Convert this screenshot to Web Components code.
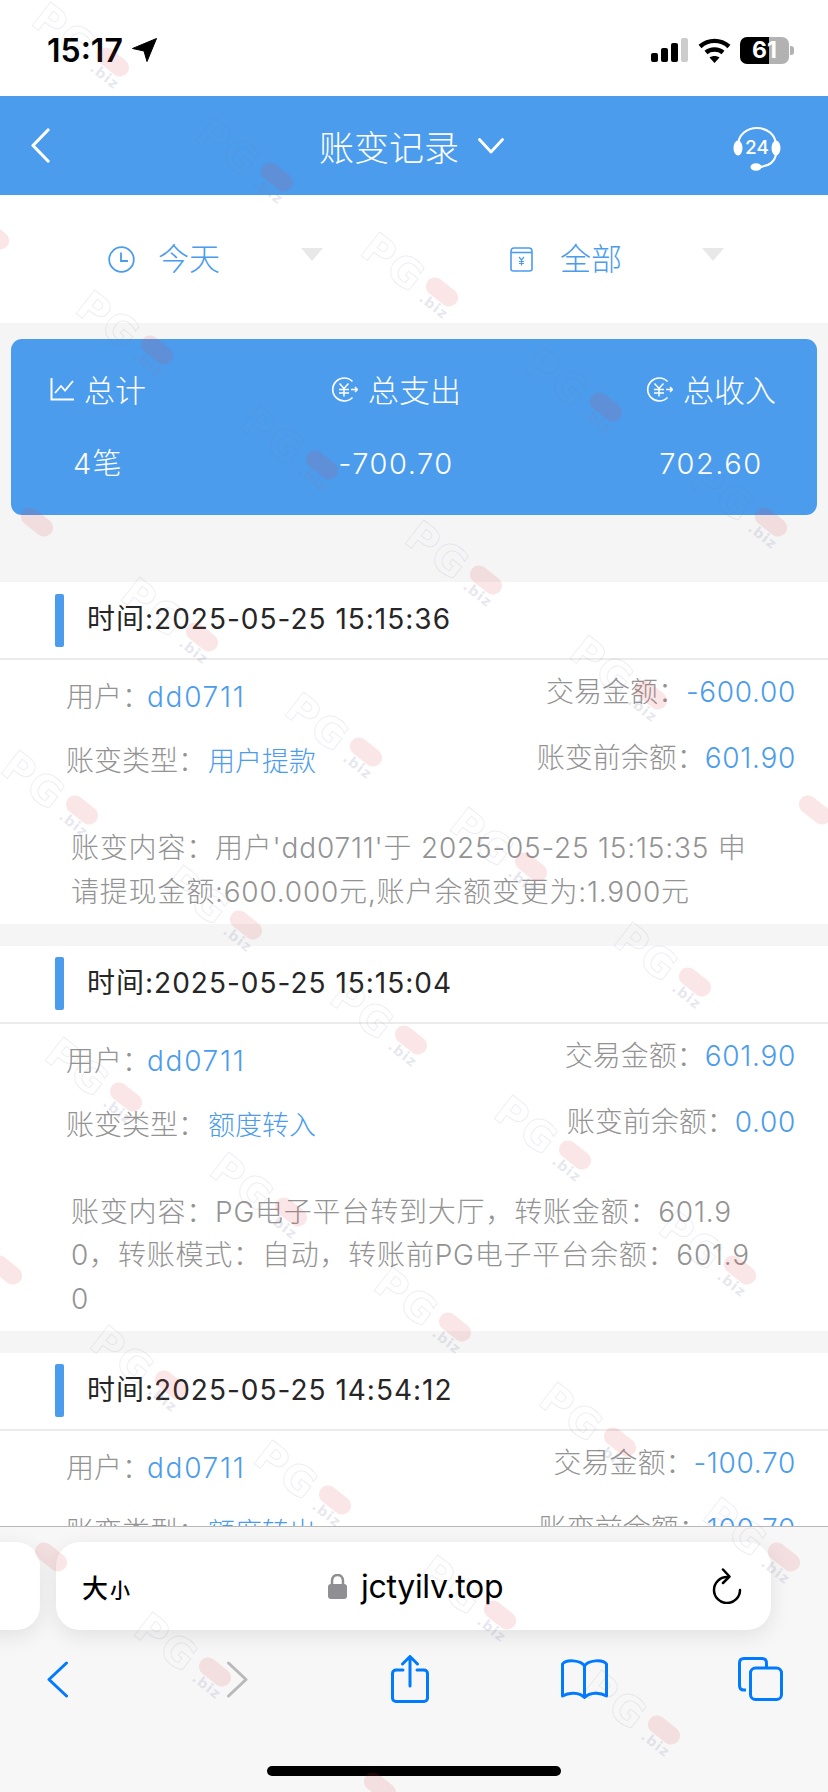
<!DOCTYPE html>
<html lang="zh-CN">
<head>
<meta charset="utf-8">
<title>账变记录</title>
<style>
  html, body { margin: 0; padding: 0; background: #f5f5f5; }
  body { width: 828px; height: 1792px; overflow: hidden; position: relative; display: flex; flex-direction: column; font-family: Inter, "Noto Sans CJK SC", sans-serif; }
  .scroll { flex: 1; min-height: 0; overflow: hidden; }
</style>
</head>
<body>
<status-bar></status-bar>
<div class="scroll">
  <app-header title="账变记录"></app-header>
  <filter-bar></filter-bar>
  <summary-card></summary-card>
  <ledger-item time="2025-05-25 15:15:36" user="dd0711" amount="-600.00" type="用户提款" balance="601.90">账变内容&#xFF1A;用户'dd0711'于 2025-05-25 15:15:35 申请提现金额:600.000元,账户余额变更为:1.900元</ledger-item>
  <ledger-item time="2025-05-25 15:15:04" user="dd0711" amount="601.90" type="额度转入" balance="0.00">账变内容&#xFF1A;PG电子平台转到大厅&#xFF0C;转账金额&#xFF1A;601.90&#xFF0C;转账模式&#xFF1A;自动&#xFF0C;转账前PG电子平台余额&#xFF1A;601.90</ledger-item>
  <ledger-item time="2025-05-25 14:54:12" user="dd0711" amount="-100.70" type="额度转出" balance="100.70"></ledger-item>
</div>
<browser-bar></browser-bar>
<pg-watermark></pg-watermark>

<script>
const COLON = '\uFF1A';
// ============================================================================
// Status bar
// ============================================================================
class StatusBar extends HTMLElement {
    connectedCallback() {
        this.attachShadow({ mode: 'open' }).innerHTML = `
      <style>
        :host { display: flex; align-items: center; height: 96px; box-sizing: border-box; padding: 4px 34px 0 47px; background: #fff; color: #000; font-family: Inter, Roboto, sans-serif; }
        .time { font-size: 32px; font-weight: 600; width: 85px; }
        .right { margin-left: auto; display: flex; align-items: center; }
        .batt { width: 49px; height: 27px; margin-left: 9px; border-radius: 7px; background: linear-gradient(90deg, #000 60%, #b2b2b2 60%); color: #fff; font-size: 23px; font-weight: 700; line-height: 27px; text-align: center; }
        .nub { width: 4px; height: 9px; background: #b2b2b2; border-radius: 0 3px 3px 0; margin-left: 1px; }
      </style>
      <span class="time">15:17</span>
      <svg width="25" height="24" viewBox="0 0 25 24"><path d="M24.5 0.5 15 23.5 12 13 0.5 10.5Z" fill="#000" stroke="#000" stroke-linejoin="round"/></svg>
      <div class="right">
        <svg width="37" height="24" viewBox="0 0 37 24"><rect x="0" y="15" width="7" height="9" rx="2" fill="#000"/><rect x="10" y="10" width="7" height="14" rx="2" fill="#000"/><rect x="20" y="5" width="7" height="19" rx="2" fill="#000"/><rect x="30" y="0" width="7" height="24" rx="2" fill="#ccc"/></svg>
        <svg width="33" height="25" viewBox="0 0 33 25" style="margin-left:10px" fill="none" stroke="#000" stroke-width="4.4"><path d="M2 8.5C10.500 1 22.500 1 31 8.500"/><path d="M8 14.500C12.500 10.500 20.500 10.500 25 14.500"/><path d="M16.500 25 11.500 19.500C14.500 17.500 18.500 17.500 21.500 19.500Z" fill="#000" stroke="none"/></svg>
        <span class="batt">61</span><span class="nub"></span>
      </div>`;
    }
}
customElements.define('status-bar', StatusBar);

// ============================================================================
// Blue title bar
// ============================================================================
class AppHeader extends HTMLElement {
    connectedCallback() {
        const title = this.getAttribute('title') || '';
        this.attachShadow({ mode: 'open' }).innerHTML = `
      <style>
        :host { display: flex; align-items: center; height: 99px; padding: 0 47px 0 30px; background: #4b9ced; color: #fff; }
        .title { flex: 1; display: flex; align-items: center; justify-content: center; gap: 19px; font: 300 35px "Noto Sans CJK SC", sans-serif; padding-left: 40px; }
        svg { display: block; }
      </style>
      <svg width="20" height="35" viewBox="0 0 20 35" fill="none" stroke="#fff" stroke-width="3.200" stroke-linecap="round" stroke-linejoin="round"><path d="M18 2 3 17.500 18 33"/></svg>
      <div class="title"><span>${title}</span>
        <svg width="26" height="16" viewBox="0 0 26 16" fill="none" stroke="#fff" stroke-width="2.800" stroke-linecap="round" stroke-linejoin="round"><path d="M1.500 1.500 13 14 24.500 1.500"/></svg>
      </div>
      <svg width="48" height="47" viewBox="0 0 48 47" style="margin-bottom:-5px">
        <path d="M5 21C5 -3 43 -3 43 21" fill="none" stroke="#fff" stroke-width="2.200"/>
        <ellipse cx="5" cy="23" rx="4.500" ry="7.500" fill="#fff"/><ellipse cx="43" cy="23" rx="4.500" ry="7.500" fill="#fff"/>
        <path d="M43 30C41 38 34 42 24 42" fill="none" stroke="#fff" stroke-width="2.200"/>
        <ellipse cx="23" cy="42" rx="5.500" ry="3.800" fill="#fff"/>
        <text x="24" y="28.500" text-anchor="middle" font-family="Inter, Roboto, sans-serif" font-size="19" font-weight="500" fill="#fff">24</text>
      </svg>`;
    }
}
customElements.define('app-header', AppHeader);

// ============================================================================
// Date + type filter row
// ============================================================================
const dropArrow = `<svg class="drop" width="22" height="13" viewBox="0 0 22 13"><path d="M0 0H22L11 13Z" fill="#e8e8e8"/></svg>`;

class FilterBar extends HTMLElement {
    connectedCallback() {
        const root = this.attachShadow({ mode: 'open' });
        root.innerHTML = `
      <style>
        :host { display: flex; height: 128px; padding-left: 108px; background: #fff; color: #4b9ced; font: 300 31px/40px "Noto Sans CJK SC", sans-serif; align-items: center; }
        .f { display: flex; align-items: center; flex: none; }
        .f.one { width: 402px; }
        svg { display: block; flex: none; }
        .drop { margin-top: -9px; }
        span { padding-bottom: 4px; }
      </style>
      <div class="f one">
        <svg width="27" height="27" viewBox="0 0 27 27" fill="none" stroke="#4b9ced" stroke-width="1.800"><circle cx="13.500" cy="13.500" r="12.300"/><path d="M13 6.500V15H20"/></svg>
        <span style="margin-left:23px;width:143px">今天</span>${dropArrow}
      </div>
      <div class="f">
        <svg width="23" height="25" viewBox="0 0 23 25" fill="none" stroke="#4b9ced" stroke-width="1.600"><path d="M1 4.500C1 2.500 2 1 4 1H19C21 1 22 2.500 22 4.500V22C22 23.500 21 24 19.500 24H3.500C2 24 1 23.500 1 22Z"/><path d="M1 5.500H22"/><path d="M9 10 11.500 13 14 10M11.500 13V18.500M9 14.500H14M9 16.500H14" stroke-width="1.200"/></svg>
        <span style="margin-left:27px;width:142px">全部</span>${dropArrow}
      </div>`;
    }
}
customElements.define('filter-bar', FilterBar);

// ============================================================================
// Totals card
// ============================================================================
const coinIcon = `<svg width="27" height="27" viewBox="0 0 27 27" fill="none" stroke="#fff" stroke-width="1.700"><path d="M21.500 5.500A11.500 11.500 0 1 0 21.500 21.500"/><path d="M8.500 7.500 13 12.500 17.500 7.500M13 12.500V20.500M8 13.500H18M8 17H18" stroke-width="1.500"/><path d="M20 13.500H26.500M24 11 26.500 13.500 24 16" stroke-width="1.400"/></svg>`;

class SummaryCard extends HTMLElement {
    connectedCallback() {
        this.attachShadow({ mode: 'open' }).innerHTML = `
      <style>
        :host { display: flex; justify-content: space-between; margin: 16px 11px 67px; height: 176px; box-sizing: border-box; padding: 28px 41px 0 39px; border-radius: 11px; background: #4b9ced; color: #fff; }
        .c { display: flex; flex-direction: column; align-items: center; }
        .h { display: flex; align-items: center; gap: 10px; font: 300 31px/44px "Noto Sans CJK SC", sans-serif; }
        .v { margin-top: 31px; font: 300 29px/44px Inter, "Noto Sans CJK SC", sans-serif; letter-spacing: 1.500px; }
        svg { display: block; }
      </style>
      <div class="c">
        <div class="h"><svg width="24" height="23" viewBox="0 0 24 23" fill="none" stroke="#fff" stroke-width="2"><path d="M1.500 0V21.500H24"/><path d="M5 15 11 8 15 12.500 23 3" stroke-width="1.800"/></svg><span>总计</span></div>
        <div class="v">4笔</div>
      </div>
      <div class="c"><div class="h">${coinIcon}<span>总支出</span></div><div class="v">-700.70</div></div>
      <div class="c"><div class="h">${coinIcon}<span>总收入</span></div><div class="v">702.60</div></div>`;
    }
}
customElements.define('summary-card', SummaryCard);

// ============================================================================
// One ledger record
// ============================================================================
class LedgerItem extends HTMLElement {
    connectedCallback() {
        const attr = (name) => this.getAttribute(name) ?? '';
        this.attachShadow({ mode: 'open' }).innerHTML = `
      <style>
        :host { display: block; margin-bottom: 22px; background: #fff; font: 300 28px Inter, "Noto Sans CJK SC", sans-serif; color: #939393; }
        .head { display: flex; align-items: center; height: 76px; border-bottom: 2px solid #ebebeb; color: #262626; font-weight: 400; padding-left: 55px; letter-spacing: 1px; }
        .head i { width: 9px; height: 53px; border-radius: 2px; background: #4b9ced; margin-right: 23px; }
        .head span { margin-bottom: 6px; }
        .row { display: flex; justify-content: space-between; padding: 0 32px 0 66px; line-height: 40px; }
        .row.a { margin-top: 17px; height: 64px; }
        .row.a .right { margin-top: -5px; }
        .row.b { height: 46px; }
        .row.b .right { margin-top: -3px; }
        b { font-weight: 300; color: #4b9ced; letter-spacing: .7px; }
        b.user { margin-left: -3px; letter-spacing: 1.700px; }
        b.type { margin-left: 2px; font-size: 27px; letter-spacing: 0; }
        .content { padding: 0 71px 9.500px; line-height: 43.500px; word-break: break-all; margin-top: 40px; letter-spacing: .8px; }
      </style>
      <div class="head"><i></i><span>时间:${attr('time')}</span></div>
      <div class="row a"><span>用户${COLON}<b class="user">${attr('user')}</b></span><span class="right">交易金额${COLON}<b>${attr('amount')}</b></span></div>
      <div class="row b"><span>账变类型${COLON}<b class="type">${attr('type')}</b></span><span class="right">账变前余额${COLON}<b>${attr('balance')}</b></span></div>
      <div class="content"><slot></slot></div>`;
    }
}
customElements.define('ledger-item', LedgerItem);

// ============================================================================
// Safari bottom chrome
// ============================================================================
class BrowserBar extends HTMLElement {
    connectedCallback() {
        this.attachShadow({ mode: 'open' }).innerHTML = `
      <style>
        :host { display: block; height: 266px; box-sizing: border-box; border-top: 1px solid #b8b8b8; background: #f7f7f7; color: #000; }
        .pills { display: flex; gap: 16px; margin: 15px 0 0 -60px; height: 88px; }
        .pill { border-radius: 24px; background: #fff; box-shadow: 0 6px 22px rgba(0,0,0,.09); height: 88px; flex: none; }
        .side { width: 100px; }
        .url { width: 715px; box-sizing: border-box; display: flex; align-items: center; padding: 0 29px 0 26px; }
        .aa { width: 246px; display: flex; align-items: baseline; font: 500 26px "Noto Sans CJK SC", sans-serif; }
        .aa small { font-size: 20px; margin-left: 2px; }
        .host { flex: 1; display: flex; align-items: center; gap: 14px; font: 400 32px Inter, Roboto, sans-serif; letter-spacing: -.3px; }
        .nav { display: grid; grid-template-columns: 180px 164px 170px 177px 1fr; padding-left: 47px; margin-top: 25px; align-items: center; height: 48px; }
        .home { width: 294px; height: 10px; border-radius: 5px; background: #000; margin: 63px 0 0 267px; }
        svg { display: block; }
      </style>
      <div class="pills">
        <div class="pill side"></div>
        <div class="pill url">
          <span class="aa">大<small>小</small></span>
          <span class="host">
            <svg width="19" height="25" viewBox="0 0 19 25"><path d="M4 11V7C4 -1 15 -1 15 7V11" fill="none" stroke="#8e8e93" stroke-width="2.500"/><rect y="10" width="19" height="15" rx="3" fill="#8e8e93"/></svg>
            jctyilv.top
          </span>
          <svg width="30" height="36" viewBox="0 0 30 36" fill="none" stroke="#000" stroke-width="2.500" stroke-linecap="round" stroke-linejoin="round"><path d="M15 9A13 13 0 1 0 28 22"/><path d="M11 1.500 17.500 8.500 11 15"/></svg>
        </div>
      </div>
      <div class="nav">
        <svg width="21" height="37" viewBox="0 0 21 37" fill="none" stroke="#007aff" stroke-width="3" stroke-linecap="round" stroke-linejoin="round"><path d="M19.500 2 2 18.500 19.500 35"/></svg>
        <svg width="21" height="37" viewBox="0 0 21 37" fill="none" stroke="#b9b9b9" stroke-width="3" stroke-linecap="round" stroke-linejoin="round"><path d="M1.500 2 19 18.500 1.500 35"/></svg>
        <svg width="38" height="48" viewBox="0 0 38 48" fill="none" stroke="#007aff" stroke-width="3" stroke-linecap="round" stroke-linejoin="round"><path d="M12 15H5C3 15 1.500 16.500 1.500 18.500V43C1.500 45 3 46.500 5 46.500H33C35 46.500 36.500 45 36.500 43V18.500C36.500 16.500 35 15 33 15H26"/><path d="M19 31V2M11.500 9 19 1.500 26.500 9"/></svg>
        <svg width="47" height="40" viewBox="0 0 47 40" fill="none" stroke="#007aff" stroke-width="3" stroke-linejoin="round"><path d="M23.500 7C20 1 5 0 1.500 5V37C8 33 18 33 23.500 38.500C29 33 39 33 45.500 37V5C42 0 27 1 23.500 7Z"/><path d="M23.500 7V38"/></svg>
        <svg width="45" height="44" viewBox="0 0 45 44" fill="none" stroke="#007aff" stroke-width="3"><path d="M8 33H6C3 33 1.500 31.500 1.500 28.500V6C1.500 3 3 1.500 6 1.500H24C27 1.500 28.500 3 28.500 6V10"/><rect x="12.500" y="11" width="31" height="31.500" rx="5"/></svg>
      </div>
      <div class="home"></div>`;
    }
}
customElements.define('browser-bar', BrowserBar);

// ============================================================================
// Diagonal site watermark laid over the whole screenshot
// ============================================================================
class PgWatermark extends HTMLElement {
    connectedCallback() {
        let marks = '';
        for (let j = 0; j < 12; j++) {
            for (let i = -6; i < 14; i++) {
                const x = 277 + 164.5 * i - 120 * j;
                const y = 177 + 115 * i + 172.5 * j;
                if (x < -40 || x > 870 || y < -20 || y > 1830)
                    continue;
                // marks running off the screen keep only the pill, no clipped text
                const whole = x > 75 && x < 800 && y > 60 && y < 1770;
                marks += `<div class="m" style="left:${x}px;top:${y}px">${whole ? '<span class="pg">PG</span><span class="biz">.biz</span>' : ''}<i></i></div>`;
            }
        }
        this.attachShadow({ mode: 'open' }).innerHTML = `
      <style>
        :host { position: absolute; inset: 0; overflow: hidden; pointer-events: none; display: block; }
        .m { position: absolute; width: 0; height: 0; transform: rotate(38deg); }
        .pg { position: absolute; left: -90px; top: -16px; font: 700 41px/46px "DejaVu Sans", sans-serif; letter-spacing: 2px; color: transparent; -webkit-text-stroke: 1px rgba(120,120,160,.14); }
        .biz { position: absolute; left: -14px; top: 7px; font: 700 14px/18px "DejaVu Sans", sans-serif; letter-spacing: 1px; color: rgba(130,130,170,.2); }
        i { position: absolute; left: -18px; top: -9px; width: 36px; height: 18px; border-radius: 9px; background: rgba(225,60,70,.13); }
      </style>
      ${marks}`;
    }
}
customElements.define('pg-watermark', PgWatermark);
</script>
</body>
</html>
